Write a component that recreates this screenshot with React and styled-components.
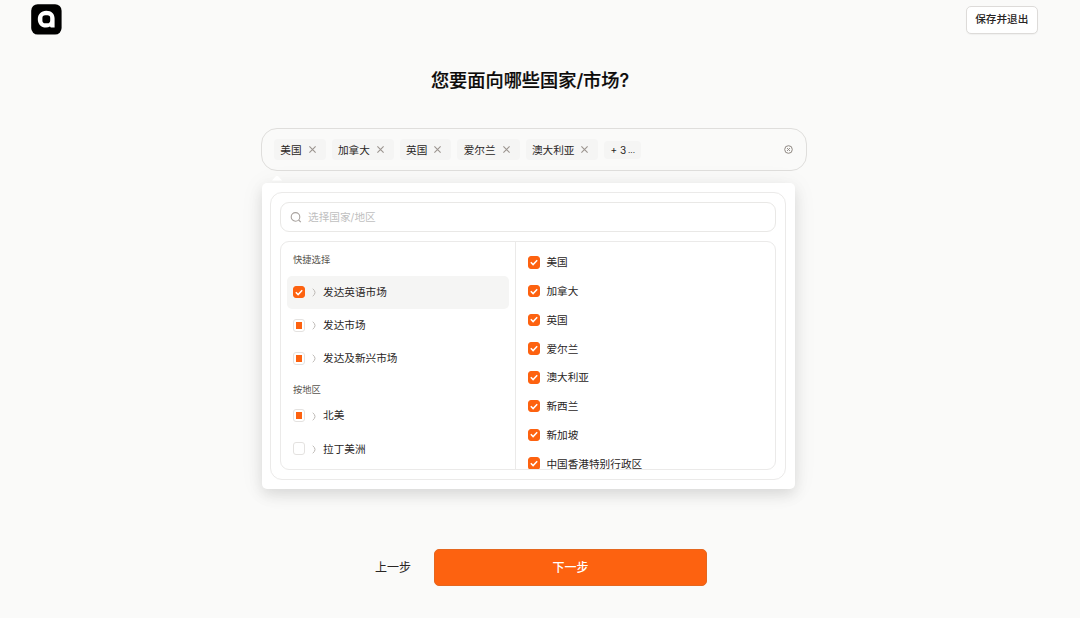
import styled, { createGlobalStyle } from "styled-components"

const tags = ["美国", "加拿大", "英国", "爱尔兰", "澳大利亚"]

const groups = [
    {
        title: "快捷选择",
        items: [
            { label: "发达英语市场", state: "checked", active: true },
            { label: "发达市场", state: "partial" },
            { label: "发达及新兴市场", state: "partial" },
        ],
    },
    {
        title: "按地区",
        items: [
            { label: "北美", state: "partial" },
            { label: "拉丁美洲", state: "empty" },
        ],
    },
]

const countries = ["美国", "加拿大", "英国", "爱尔兰", "澳大利亚", "新西兰", "新加坡", "中国香港特别行政区"]

function Logo() {
    return (
        <svg width="31" height="31" viewBox="0 0 31 31">
            <rect x="0.2" y="0.2" width="30.4" height="30.4" rx="6.5" fill="#000" />
            <path
                fillRule="evenodd"
                d="M15.2 6.8C20.8 6.8 23.6 10 23.6 14.6V23.6H19.8L19 22.6Q17.4 23.6 15 23.6C10 23.6 6.8 20 6.8 15.2S10 6.8 15.2 6.8zM14.2 11.2Q11.4 11.2 11.4 14V16.4Q11.4 19.2 14.2 19.2H16.4Q19.2 19.2 19.2 16.4V14Q19.2 11.2 16.4 11.2z"
                fill="#fff"
            />
        </svg>
    )
}

function CloseIcon() {
    return (
        <svg width="7" height="7" viewBox="0 0 7 7">
            <path d="M0.4 0.4l6.2 6.2M6.6 0.4l-6.2 6.2" stroke="#9b948f" strokeWidth="1.1" />
        </svg>
    )
}

function ClearIcon() {
    return (
        <svg width="9" height="9" viewBox="0 0 9 9" fill="none" stroke="#8f8883" strokeWidth="1">
            <circle cx="4.5" cy="4.5" r="3.8" />
            <path d="M3.1 3.1l2.8 2.8M5.9 3.1L3.1 5.9" />
        </svg>
    )
}

function SearchIcon() {
    return (
        <svg width="12" height="12" viewBox="0 0 12 12" fill="none" stroke="#a8a29e" strokeWidth="1.1">
            <circle cx="5.5" cy="5.9" r="4.3" />
            <path d="M8.6 9l2.2 2.2" />
        </svg>
    )
}

function Check({ state }) {
    return (
        <Box $state={state}>
            {state === "checked" && (
                <svg width="8" height="7" viewBox="0 0 8 7">
                    <path d="M0.8 3.3l2.3 2.3L7.2 1.3" fill="none" stroke="#fff" strokeWidth="1.5" />
                </svg>
            )}
            {state === "partial" && <Dot />}
        </Box>
    )
}

export default function App() {
    return (
        <Page>
            <GlobalStyle />
            <Header>
                <Logo />
                <SaveButton>保存并退出</SaveButton>
            </Header>
            <Title>您要面向哪些国家/市场?</Title>
            <Select>
                {tags.map((tag) => (
                    <Tag key={tag}>
                        {tag}
                        <CloseIcon />
                    </Tag>
                ))}
                <More>
                    + 3<small>...</small>
                </More>
                <Clear>
                    <ClearIcon />
                </Clear>
            </Select>
            <Popup>
                <Arrow width="10" height="6" viewBox="0 0 10 6">
                    <path d="M0 5.4L3.8 1.2Q5 0.2 6.2 1.2L10 5.4z" fill="#fff" />
                </Arrow>
                <Panel>
                    <Search>
                        <SearchIcon />
                        选择国家/地区
                    </Search>
                    <Lists>
                        <Groups>
                            {groups.map((group) => (
                                <div key={group.title}>
                                    <GroupTitle>{group.title}</GroupTitle>
                                    {group.items.map((item) => (
                                        <GroupRow key={item.label} $active={item.active}>
                                            <Check state={item.state} />
                                            <svg width="4" height="9" viewBox="0 0 4 9">
                                                <path d="M0.7 0.8Q3 2.4 3 4.5Q3 6.6 0.7 8.2" fill="none" stroke="#bcb8b4" strokeWidth="1" />
                                            </svg>
                                            <Name>{item.label}</Name>
                                        </GroupRow>
                                    ))}
                                </div>
                            ))}
                        </Groups>
                        <Countries>
                            {countries.map((country) => (
                                <CountryRow key={country}>
                                    <Check state="checked" />
                                    <Name>{country}</Name>
                                </CountryRow>
                            ))}
                        </Countries>
                    </Lists>
                </Panel>
            </Popup>
            <Footer>
                <BackButton>上一步</BackButton>
                <NextButton>下一步</NextButton>
            </Footer>
        </Page>
    )
}

const GlobalStyle = createGlobalStyle`
    * {
        box-sizing: border-box;
    }

    body {
        margin: 0;
        background: #fafaf9;
    }

    button {
        font-family: inherit;
        padding: 0;
    }

    svg {
        flex-shrink: 0;
        display: block;
    }
`

const Page = styled.div`
    height: 618px;
    overflow: hidden;
    display: flex;
    flex-direction: column;
    font-family: Inter, "Noto Sans CJK SC", sans-serif;
    font-size: 10.65px;
    color: #292524;
`

const Header = styled.header`
    display: flex;
    justify-content: space-between;
    align-items: center;
    height: 39px;
    padding: 0 42.5px 0 31px;
`

const SaveButton = styled.button`
    width: 71.5px;
    height: 28px;
    border: 1px solid #dddbd9;
    border-radius: 5px;
    background: #fff;
    box-shadow: 0 1px 1px rgba(0, 0, 0, 0.04);
    font-size: 10.65px;
    font-weight: 500;
    line-height: 24px;
    color: #292524;
`

const Title = styled.h1`
    margin: 26px 0 0;
    padding-right: 20px;
    height: 30px;
    line-height: 30px;
    text-align: center;
    font-size: 18.2px;
    font-weight: 500;
    -webkit-text-stroke: 0.2px #0c0a09;
    color: #0c0a09;
`

const Select = styled.div`
    display: flex;
    align-items: center;
    gap: 6px;
    width: 546px;
    height: 43px;
    margin: 33px 0 0 261px;
    padding: 0 13.5px 0 12px;
    border: 1px solid #dfdedc;
    border-radius: 16px;
`

const Tag = styled.div`
    display: flex;
    align-items: center;
    gap: 7px;
    height: 21px;
    padding: 0 10px 0 6.3px;
    border-radius: 4px;
    background: #f5f5f4;
`

const More = styled(Tag)`
    gap: 2px;
    height: 18px;
    padding: 0 6px;
    font-size: 10px;

    small {
        font-size: 8px;
    }
`

const Clear = styled.div`
    margin-left: auto;
`

const Popup = styled.div`
    position: relative;
    width: 533.5px;
    height: 306px;
    margin: 12px 0 0 261.5px;
    padding: 9px 9px 9px 8.5px;
    border-radius: 5px;
    background: #fff;
    box-shadow: 0 6px 14px rgba(0, 0, 0, 0.1), 0 2px 26px rgba(0, 0, 0, 0.06);
`

const Arrow = styled.svg`
    position: absolute;
    left: 10.5px;
    top: -8px;
`

const Panel = styled.div`
    display: flex;
    flex-direction: column;
    gap: 9px;
    height: 288px;
    padding: 9px;
    border: 1px solid #ebeae9;
    border-radius: 12px;
`

const Search = styled.div`
    display: flex;
    align-items: center;
    gap: 6px;
    height: 30px;
    flex-shrink: 0;
    padding: 0 0 1px 9px;
    border: 1px solid #e9e8e6;
    border-radius: 9px;
    color: #bfbfbf;
`

const Lists = styled.div`
    display: flex;
    flex: 1;
    min-height: 0;
    overflow: hidden;
    border: 1px solid #ebeae9;
    border-radius: 9px;
`

const Groups = styled.div`
    width: 235px;
    padding: 9.4px 6px 0;
    border-right: 1px solid #ebeae9;
`

const GroupTitle = styled.div`
    height: 24.3px;
    padding: 0 6px;
    line-height: 18px;
    font-size: 9.3px;
    color: #57534e;

    div + div > & {
        margin-top: 6px;
        height: 18px;
    }
`

const GroupRow = styled.div`
    display: flex;
    align-items: center;
    height: 33.1px;
    padding-left: 6px;
    border-radius: 5px;
    background: ${(props) => (props.$active ? "#f5f5f4" : "transparent")};

    svg:nth-child(2) {
        margin: 1px 6.6px 0 7px;
    }
`

const Countries = styled.div`
    flex: 1;
    padding: 6px 12px 0;
`

const CountryRow = styled.div`
    display: flex;
    align-items: center;
    gap: 6px;
    height: 28.75px;
`

const Name = styled.span`
    padding-bottom: 1.2px;
`

const Box = styled.div`
    display: flex;
    align-items: center;
    justify-content: center;
    flex-shrink: 0;
    width: 12.4px;
    height: 12.4px;
    border: 1px solid ${(props) => (props.$state === "checked" ? "#fd6210" : "#e4e2e0")};
    border-radius: 3px;
    background: ${(props) => (props.$state === "checked" ? "#fd6210" : "#fff")};
`

const Dot = styled.div`
    width: 6.4px;
    height: 6.4px;
    background: #fd6210;
`

const Footer = styled.footer`
    display: flex;
    align-items: center;
    gap: 23px;
    margin: 60px 0 0 375px;
`

const BackButton = styled.button`
    padding-bottom: 2px;
    border: 0;
    background: none;
    font-size: 12px;
    color: #292524;
`

const NextButton = styled.button`
    width: 273px;
    height: 37px;
    padding-bottom: 2px;
    border: 1px solid #e5671f;
    border-radius: 5px;
    background: #fd6210;
    font-size: 12px;
    font-weight: 500;
    color: #fff;
`
